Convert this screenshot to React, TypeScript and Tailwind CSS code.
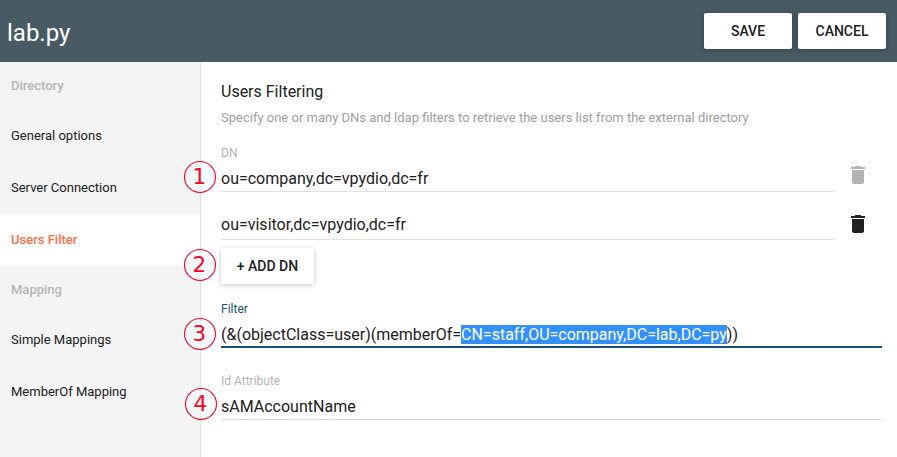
import type { ReactNode } from "react";

function SideHeader({ children }: { children: ReactNode }) {
  return (
    <div className="flex h-12 items-center pl-[11px] text-[13px] font-medium text-[#b6b6b6]">{children}</div>
  );
}

function SideItem({ children, active = false }: { children: ReactNode; active?: boolean }) {
  return (
    <div
      className={
        active
          ? "flex h-[52px] items-center bg-white pl-[11px] text-[13px] font-medium text-[#ff7043]"
          : "flex h-[52px] items-center pl-[11px] text-[13px] text-[#212121]"
      }
    >
      {children}
    </div>
  );
}

function RaisedButton({ children, className }: { children: ReactNode; className: string }) {
  return (
    <button
      className={`flex h-9 items-center justify-center rounded-[2px] bg-white text-[14px] font-medium text-[#212121] shadow-[0_1px_6px_rgba(0,0,0,0.12),0_1px_4px_rgba(0,0,0,0.12)] ${className}`}
    >
      {children}
    </button>
  );
}

function TrashIcon({ className }: { className: string }) {
  return (
    <svg viewBox="0 0 24 24" className={`h-6 w-6 ${className}`} fill="currentColor">
      <path d="M6 19c0 1.1.9 2 2 2h8c1.1 0 2-.9 2-2V7H6v12zM19 4h-3.5l-1-1h-5l-1 1H5v2h14V4z" />
    </svg>
  );
}

function Marker({ n, className }: { n: string; className: string }) {
  return (
    <svg viewBox="0 0 34 34" className={`absolute h-[34px] w-[34px] ${className}`}>
      <circle cx="17" cy="17" r="15.5" fill="#eefaff" fillOpacity="0.5" stroke="#ff0022" strokeWidth="1.1" />
      <text x="16.3" y="24" textAnchor="middle" fontSize="21.5" fill="#ff0022" className="font-['DejaVu_Sans',sans-serif]">
        {n}
      </text>
    </svg>
  );
}

export default function App() {
  return (
    <div className="relative flex h-[457px] w-[897px] flex-col overflow-hidden bg-white font-[Roboto,sans-serif] text-[#212121]">
      <header className="flex h-[62px] shrink-0 items-center bg-[#485a63] pr-[11px] pl-[7px]">
        <h1 className="flex-1 pt-[3px] text-[24px] leading-8 text-white">lab.py</h1>
        <div className="flex gap-1.5">
          <RaisedButton className="w-[88px]">SAVE</RaisedButton>
          <RaisedButton className="w-[88px]">CANCEL</RaisedButton>
        </div>
      </header>
      <div className="flex flex-1">
        <nav className="w-[201px] shrink-0 border-r border-[#e0e0e0] bg-[#f4f4f4]">
          <SideHeader>Directory</SideHeader>
          <SideItem>General options</SideItem>
          <SideItem>Server Connection</SideItem>
          <SideItem active>Users Filter</SideItem>
          <SideHeader>Mapping</SideHeader>
          <SideItem>Simple Mappings</SideItem>
          <SideItem>MemberOf Mapping</SideItem>
        </nav>
        <main className="flex flex-1 flex-col pt-5 pr-[15px] pl-5">
          <h2 className="h-5 text-[16px] leading-5">Users Filtering</h2>
          <p className="mt-[7px] h-[18px] text-[13px] leading-[18px] text-[#9e9e9e]">
            Specify one or many DNs and ldap filters to retrieve the users list from the external directory
          </p>
          <div className="flex h-[65px]">
            <div className="flex w-[613px] flex-col border-b border-[#e0e0e0] pt-[19px]">
              <label className="h-[14px] text-[12px] leading-[14px] text-[#b4b4b4]">DN</label>
              <div className="mt-[9px] text-[16px] leading-5">ou=company,dc=vpydio,dc=fr</div>
            </div>
            <TrashIcon className="mt-9 ml-3 text-[#b3b3b3]" />
          </div>
          <div className="flex h-12">
            <div className="w-[613px] border-b border-[#e0e0e0] pt-[23px] text-[16px] leading-5">ou=visitor,dc=vpydio,dc=fr</div>
            <TrashIcon className="mt-5 ml-3" />
          </div>
          <RaisedButton className="mt-2 w-[93px] shrink-0">+ ADD DN</RaisedButton>
          <div className="mt-[18px] h-[46px] border-b-2 border-[#1a4f70]">
            <label className="block h-[14px] text-[12px] leading-[14px] text-[#1a4f70]">Filter</label>
            <div className="mt-[9px] text-[16px] leading-[19px]">
              (&amp;(objectClass=user)(memberOf=
              <span className="bg-[#3390ff] text-white">CN=staff,OU=company,DC=lab,DC=py</span>))
            </div>
          </div>
          <div className="mt-[26px] h-[46px] border-b border-[#e0e0e0]">
            <label className="block h-[14px] text-[12px] leading-[14px] text-[#b4b4b4]">Id Attribute</label>
            <div className="mt-[9px] text-[16px] leading-5">sAMAccountName</div>
          </div>
        </main>
      </div>
      <Marker n="1" className="top-[160px] left-[183px]" />
      <Marker n="2" className="top-[248px] left-[183px]" />
      <Marker n="3" className="top-[317px] left-[183px]" />
      <Marker n="4" className="top-[387px] left-[184px]" />
    </div>
  );
}
